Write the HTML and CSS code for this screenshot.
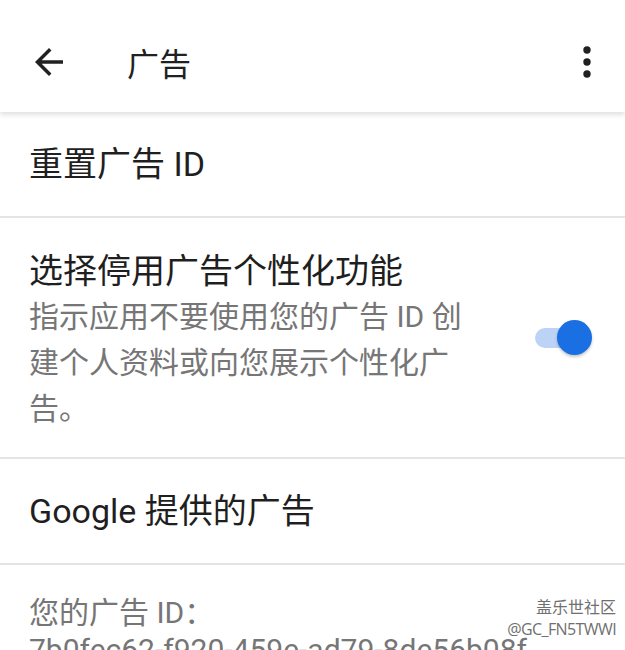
FILE: index.html
```html
<!DOCTYPE html>
<html lang="zh-CN">
<head>
  <meta charset="UTF-8">
  <title>广告</title>
  <link rel="stylesheet" href="styles.css">
</head>
<body>

  <div class="app-bar">
    <button class="icon-btn back-btn" aria-label="返回">
      <svg width="42" height="42" viewBox="0 0 24 24"><path d="M20 11H7.83l5.59-5.59L12 4l-8 8 8 8 1.41-1.41L7.83 13H20v-2z" fill="#212121"/></svg>
    </button>
    <h1 class="app-title">广告</h1>
    <button class="icon-btn more-btn" aria-label="更多">
      <svg width="48" height="48" viewBox="0 0 24 24"><circle cx="12" cy="6" r="1.85" fill="#212121"/><circle cx="12" cy="12" r="1.85" fill="#212121"/><circle cx="12" cy="18" r="1.85" fill="#212121"/></svg>
    </button>
  </div>

  <div class="settings-list">
    <div class="row row-single">
      <div class="row-title">重置广告 ID</div>
    </div>

    <div class="row row-switch">
      <div class="row-text">
        <div class="row-title">选择停用广告个性化功能</div>
        <div class="row-summary">指示应用不要使用您的广告 ID 创建个人资料或向您展示个性化广告。</div>
      </div>
      <div class="switch on">
        <span class="switch-track"></span>
        <span class="switch-thumb"></span>
      </div>
    </div>

    <div class="row row-single">
      <div class="row-title">Google 提供的广告</div>
    </div>

    <div class="row row-info">
      <div class="row-summary tight">您的广告 ID：</div>
      <div class="row-summary tight ad-id">7b0fec62-f920-459e-ad79-8de56b08f</div>
    </div>
  </div>

  <div class="watermark">
    <div class="wm-name">盖乐世社区</div>
    <div class="wm-user">@GC_FN5TWWI</div>
  </div>

</body>
</html>
```

FILE: styles.css
```css
* {
  box-sizing: border-box;
}
body {
  margin: 0;
  background: #fff;
  font-family: Roboto, "Noto Sans CJK SC", sans-serif;
  color: #212121;
  overflow: hidden;
}

.app-bar {
  position: relative;
  z-index: 2;
  height: 112px;
  padding-top: 11px;
  display: flex;
  align-items: center;
  background: #fff;
  box-shadow: 0 3px 5px rgba(0,0,0,0.12);
}
.icon-btn {
  border: 0;
  background: none;
  padding: 0;
  display: flex;
}
.back-btn {
  margin-left: 28px;
}
.app-title {
  margin: 0 0 0 57px;
  font-size: 32px;
  font-weight: 400;
  flex: 1;
}
.more-btn {
  margin-right: 14px;
}

.settings-list {
  position: relative;
  z-index: 1;
}
.row {
  padding: 0 29px;
  border-bottom: 2px solid #e4e4e4;
}
.row-single {
  height: 106px;
  display: flex;
  align-items: center;
}
.row-title {
  font-size: 34px;
  line-height: 46px;
  color: #1f1f1f;
}
.row-summary {
  font-size: 30px;
  line-height: 46px;
  color: #767676;
}
.row-summary.tight {
  line-height: 36px;
}
.ad-id {
  margin-top: 1px;
}

.row-switch {
  display: flex;
  align-items: center;
  justify-content: space-between;
  padding-top: 30px;
  padding-bottom: 25px;
}
.row-text {
  width: 445px;
}
.switch {
  position: relative;
  width: 57px;
  height: 35px;
  margin-right: 4px;
  margin-bottom: 6px;
}
.switch-track {
  position: absolute;
  left: 0;
  top: 8px;
  width: 50px;
  height: 20px;
  border-radius: 10px;
  background: #bdd3f6;
}
.switch-thumb {
  position: absolute;
  right: 0;
  top: 0;
  width: 35px;
  height: 35px;
  border-radius: 50%;
  background: #1a6fe3;
  box-shadow: 0 2px 3px rgba(0,0,0,0.22);
}

.row-info {
  border-bottom: 0;
  padding-top: 30px;
}

.watermark {
  position: absolute;
  right: 9px;
  top: 597px;
  text-align: right;
  color: #707070;
  z-index: 3;
}
.wm-name {
  font-size: 16px;
  line-height: 22px;
}
.wm-user {
  font-family: "Open Sans", sans-serif;
  font-size: 16px;
  line-height: 20px;
  letter-spacing: -0.6px;
}
```
